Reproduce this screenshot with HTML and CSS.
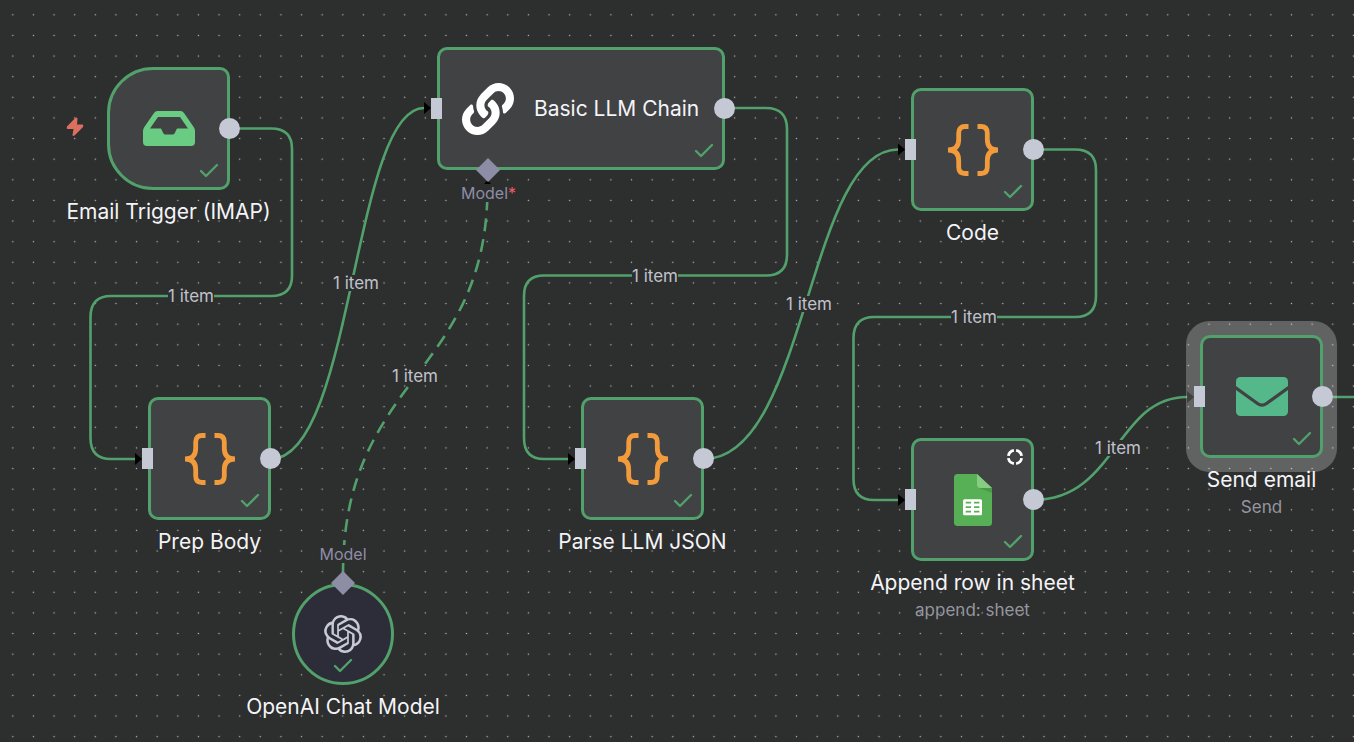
FILE: index.html
```html
<!DOCTYPE html>
<html lang="en">
<head>
<meta charset="utf-8">
<title>Workflow canvas</title>
<link rel="stylesheet" href="styles.css">
</head>
<body>
<svg class="defs" aria-hidden="true">
  <symbol id="check" viewBox="0 0 20 16"><path d="M2 8l5 5L18 2" fill="none" stroke="currentColor" stroke-width="2.4" stroke-linecap="round" stroke-linejoin="round"/></symbol>
  <symbol id="braces" viewBox="0 0 50 52"><g fill="none" stroke="#f29b3c" stroke-width="4.8" stroke-linejoin="round"><path d="M20.5 2.5H17Q10.7 2.5 10.7 9v6.500Q10.700 25.900 0 26Q10.700 26.100 10.700 36.500V43Q10.700 49.500 17 49.500h3.500"/><path d="M29.500 2.500H33Q39.300 2.500 39.300 9v6.500Q39.300 25.900 50 26Q39.300 26.100 39.300 36.500V43Q39.300 49.500 33 49.500h-3.500"/></g></symbol>
</svg>
<main class="canvas">
  <svg class="layer" aria-hidden="true">
    <defs>
      <pattern id="dots" width="16" height="16" patternUnits="userSpaceOnUse" patternTransform="translate(2.500 4.500) scale(1.289)"><circle cx="8" cy="8" r=".56" fill="#b4b5b5"/></pattern>
      <marker id="arrow" viewBox="0 0 7 12" refX="0" refY="6" markerWidth="7" markerHeight="12" markerUnits="userSpaceOnUse" orient="auto"><path d="M0 0l7 6-7 6z"/></marker>
    </defs>
    <rect width="100%" height="100%" fill="url(#dots)"/>
    <g class="edges">
      <path d="M230 128.500H271Q292 128.500 292 149V276Q292 296 271 296H111Q90.500 296 90.500 317V438Q90.500 459 111 459H135"/>
      <path d="M271 459C353 459 353 108 424 108"/>
      <path d="M725 108H766Q787 108 787 129V255Q787 275.500 766 275.500H544Q524 275.500 524 296V438Q524 459 544 459H568"/>
      <path d="M704 459C807 459 807 149.500 898 149.500"/>
      <path d="M1034 149.500H1075Q1096 149.500 1096 170V296Q1096 317 1075 317H874Q853.500 317 853.500 338V479Q853.500 500 874 500H898"/>
      <path d="M1034 500C1116 500 1116 397 1187 397"/>
      <path d="M1323 397H4000" marker-end="none"/>
      <path class="dashed" d="M343 574C343 376 487.500 376 487.500 187"/>
    </g>
  </svg>

  <span class="count c1">1 item</span>
  <span class="count c2">1 item</span>
  <span class="count c3">1 item</span>
  <span class="count c4">1 item</span>
  <span class="count c5">1 item</span>
  <span class="count c6">1 item</span>
  <span class="count c7">1 item</span>

  <svg class="bolt" viewBox="0 0 18 20" aria-hidden="true"><path d="M10.500 .5Q11.800 .5 11.500 2L11 7.500H16.500Q18 8 17 10L8.500 18.500Q6.500 19.500 6.500 18L7.500 12H1.500Q0 11.500 1 9.500L9 1.200Q9.700 .5 10.500 .5Z" fill="#dc705f"/></svg>

  <article class="node email">
    <div class="box trigger">
      <svg class="inbox" viewBox="0 0 52 35"><path fill-rule="evenodd" fill="#6acb83" d="M11 2Q12.300 0 14.500 0H37.500Q39.700 0 41 2L51 16.500Q52 18 52 20V31Q52 35 48 35H4Q0 35 0 31V20Q0 18 1 16.500ZM15 6L7 17.500H18L20.500 22.500Q21 23.500 22 23.500H30Q31 23.500 31.500 22.500L34 17.500H45L37 6Z"/></svg>
      <svg class="check"><use href="#check"/></svg><i class="out"></i>
    </div>
    <h2>Email Trigger (IMAP)</h2>
  </article>

  <article class="node chain">
    <div class="box wide">
      <svg class="link" viewBox="0 0 512 512"><path fill="#fff" d="M326.612 185.391c59.747 59.809 58.927 155.698.36 214.59-.11.12-.24.25-.36.37l-67.200 67.200c-59.270 59.270-155.699 59.262-214.960 0-59.270-59.260-59.270-155.700 0-214.960l37.106-37.106c9.840-9.840 26.786-3.300 27.294 10.606.648 17.722 3.826 35.527 9.690 52.721 1.986 5.822.567 12.262-3.783 16.612l-13.087 13.087c-28.026 28.026-28.905 73.660-1.155 101.960 28.024 28.579 74.086 28.749 102.325.51l67.200-67.190c28.191-28.191 28.073-73.757 0-101.830-3.701-3.694-7.429-6.564-10.341-8.569a16.037 16.037 0 0 1-6.947-12.606c-.396-10.567 3.348-21.456 11.698-29.806l21.054-21.055c5.521-5.521 14.182-6.199 20.584-1.731a152.482 152.482 0 0 1 20.522 17.197zM467.547 44.449c-59.261-59.262-155.690-59.270-214.960 0l-67.200 67.200c-.12.12-.25.25-.36.37-58.566 58.892-59.387 154.781.36 214.590a152.454 152.454 0 0 0 20.521 17.196c6.402 4.468 15.064 3.789 20.584-1.731l21.054-21.055c8.350-8.350 12.094-19.239 11.698-29.806a16.037 16.037 0 0 0-6.947-12.606c-2.912-2.005-6.640-4.875-10.341-8.569-28.073-28.073-28.191-73.639 0-101.830l67.200-67.190c28.239-28.239 74.300-28.069 102.325.51 27.750 28.300 26.872 73.934-1.155 101.960l-13.087 13.087c-4.350 4.350-5.769 10.790-3.783 16.612 5.864 17.194 9.042 34.999 9.690 52.721.509 13.906 17.454 20.446 27.294 10.606l37.106-37.106c59.271-59.259 59.271-155.699.001-214.959z"/></svg>
      <h2>Basic LLM Chain</h2>
      <svg class="check"><use href="#check"/></svg><i class="in"></i><i class="out"></i>
      <svg class="diamond slot" viewBox="0 0 24 24"><path d="M12 0l12 12-12 12L0 12z"/></svg>
      <span class="port need">Model<b>*</b></span>
    </div>
  </article>

  <article class="node prep">
    <div class="box"><svg class="braces"><use href="#braces"/></svg><svg class="check"><use href="#check"/></svg><i class="in"></i><i class="out"></i></div>
    <h2>Prep Body</h2>
  </article>

  <article class="node parse">
    <div class="box"><svg class="braces"><use href="#braces"/></svg><svg class="check"><use href="#check"/></svg><i class="in"></i><i class="out"></i></div>
    <h2>Parse LLM JSON</h2>
  </article>

  <article class="node code">
    <div class="box"><svg class="braces"><use href="#braces"/></svg><svg class="check"><use href="#check"/></svg><i class="in"></i><i class="out"></i></div>
    <h2>Code</h2>
  </article>

  <article class="node append">
    <div class="box">
      <svg class="sheet" viewBox="0 0 38 52"><path fill="#57b055" d="M3.500 0H23L38 14V48.500Q38 52 34.500 52H3.500Q0 52 0 48.500V3.500Q0 0 3.500 0Z"/><path fill="#499a49" d="M25 14H38V19Z"/><path fill="#86cc83" d="M23 0L38 14H26.500Q23 14 23 10.500Z"/><rect x="9" y="25.300" width="19" height="16" rx="1.500" fill="#fff"/><path fill="#57b055" d="M11.700 27.800h5.400v1.700h-5.400zM20 27.800h5.400v1.700H20zM11.700 32.300h5.400V34h-5.400zM20 32.300h5.400V34H20zM11.700 36.800h5.400v1.700h-5.400zM20 36.800h5.400v1.700H20z"/></svg>
      <svg class="ring" viewBox="0 0 18 18"><circle cx="9" cy="9" r="6.700" pathLength="40" fill="none" stroke="#fff" stroke-width="2.800" stroke-dasharray="7.800 2.200" stroke-dashoffset="-1.100"/></svg>
      <svg class="check"><use href="#check"/></svg><i class="in"></i><i class="out"></i>
    </div>
    <h2>Append row in sheet</h2>
    <p>append: sheet</p>
  </article>

  <article class="node send">
    <div class="box selected">
      <svg class="envelope" viewBox="0 0 52 39"><rect width="52" height="39" rx="4.500" fill="#55b88a"/><path d="M-1 10.200L21.500 26.500Q26 29.800 30.500 26.500L53 10.200" fill="none" stroke="#414244" stroke-width="3.200"/></svg>
      <svg class="check"><use href="#check"/></svg><i class="in"></i><i class="out"></i>
    </div>
    <h2>Send email</h2>
    <p>Send</p>
  </article>

  <article class="node model">
    <div class="box round">
      <svg class="openai" viewBox="0 0 24 24"><path fill="#c6c9d6" d="M22.2819 9.8211a5.9847 5.9847 0 0 0-.5157-4.9108 6.0462 6.0462 0 0 0-6.5098-2.9A6.0651 6.0651 0 0 0 4.9807 4.1818a5.9847 5.9847 0 0 0-3.9977 2.9 6.0462 6.0462 0 0 0 .7427 7.0966 5.98 5.98 0 0 0 .511 4.9107 6.051 6.051 0 0 0 6.5146 2.9001A5.9847 5.9847 0 0 0 13.2599 24a6.0557 6.0557 0 0 0 5.7718-4.2058 5.9894 5.9894 0 0 0 3.9977-2.9001 6.0557 6.0557 0 0 0-.7475-7.0729zm-9.022 12.6081a4.4755 4.4755 0 0 1-2.8764-1.0408l.1419-.0804 4.7783-2.7582a.7948.7948 0 0 0 .3927-.6813v-6.7369l2.02 1.1686a.071.071 0 0 1 .038.052v5.5826a4.504 4.504 0 0 1-4.4945 4.4944zm-9.6607-4.1254a4.4708 4.4708 0 0 1-.5346-3.0137l.142.0852 4.783 2.7582a.7712.7712 0 0 0 .7806 0l5.8428-3.3685v2.3324a.0804.0804 0 0 1-.0332.0615L9.74 19.9502a4.4992 4.4992 0 0 1-6.1408-1.6464zM2.3408 7.8956a4.485 4.485 0 0 1 2.3655-1.9728V11.6a.7664.7664 0 0 0 .3879.6765l5.8144 3.3543-2.0201 1.1685a.0757.0757 0 0 1-.071 0l-4.8303-2.7865A4.504 4.504 0 0 1 2.3408 7.872zm16.5963 3.8558L13.1038 8.364 15.1192 7.2a.0757.0757 0 0 1 .071 0l4.8303 2.7913a4.4944 4.4944 0 0 1-.6765 8.1042v-5.6772a.79.79 0 0 0-.407-.667zm2.0107-3.0231l-.142-.0852-4.7735-2.7818a.7759.7759 0 0 0-.7854 0L9.409 9.2297V6.8974a.0662.0662 0 0 1 .0284-.0615l4.8303-2.7866a4.4992 4.4992 0 0 1 6.6802 4.66zM8.3065 12.863l-2.02-1.1638a.0804.0804 0 0 1-.038-.0567V6.0742a4.4992 4.4992 0 0 1 7.3757-3.4537l-.142.0805L8.704 5.459a.7948.7948 0 0 0-.3927.6813zm1.0976-2.3654l2.602-1.4998 2.6069 1.4998v2.9994l-2.5974 1.4997-2.6067-1.4997Z"/></svg>
      <svg class="check"><use href="#check"/></svg>
      <svg class="diamond top" viewBox="0 0 24 24"><path d="M12 0l12 12-12 12L0 12z"/></svg>
      <span class="port above">Model</span>
    </div>
    <h2>OpenAI Chat Model</h2>
  </article>
</main>
</body>
</html>
```
FILE: styles.css
```css
:root {
  --canvas: #2d2e2e;
  --box: #414244;
  --green: #52a16c;
  --handle: #c5c8d5;
  --port: #8d8da6;
}

* { box-sizing: border-box; }

body {
  margin: 0;
  background: var(--canvas);
  font-family: Inter, "Liberation Sans", sans-serif;
}

.defs { position: absolute; width: 0; height: 0; }

.canvas {
  position: relative;
  min-height: 100vh;
  overflow: hidden;
}

.layer { position: absolute; inset: 0; width: 100%; height: 100%; }

.edges path {
  fill: none;
  stroke: var(--green);
  stroke-width: 2.6;
  marker-end: url(#arrow);
}
.edges path[marker-end="none"] { marker-end: none; }
.edges .dashed { stroke-dasharray: 13 8; }

marker path { fill: #000; stroke: none; }

.count {
  position: absolute;
  transform: translate(-50%, -50%);
  background: var(--canvas);
  color: #c0c1cb;
  font-size: 17px;
  line-height: 16px;
  white-space: nowrap;
}
.c1 { left: 191px; top: 296px; }
.c2 { left: 356px; top: 283px; }
.c3 { left: 415px; top: 376px; }
.c4 { left: 655px; top: 276px; }
.c5 { left: 809px; top: 304px; }
.c6 { left: 974px; top: 317px; }
.c7 { left: 1118px; top: 448px; }

.bolt { position: absolute; left: 66px; top: 117px; width: 18px; height: 20px; }

.node {
  position: absolute;
  display: flex;
  flex-direction: column;
  align-items: center;
  width: 123px;
}
.email { left: 107px; top: 67px; }
.chain { left: 437px; top: 47px; width: 288px; }
.prep { left: 148px; top: 397px; }
.parse { left: 581px; top: 397px; }
.code { left: 911px; top: 88px; }
.append { left: 911px; top: 438px; }
.send { left: 1200px; top: 335px; }
.model { left: 292px; top: 583px; width: 102px; }

.node h2 {
  margin: 8px 0 0;
  color: #f4f4f8;
  font-size: 21px;
  font-weight: 400;
  line-height: 27px;
  white-space: nowrap;
}
.node p {
  margin: 4px 0 0;
  color: #95969f;
  font-size: 17px;
  line-height: 20px;
  white-space: nowrap;
}

.box {
  position: relative;
  display: flex;
  align-items: center;
  justify-content: center;
  width: 100%;
  height: 123px;
  border: 3px solid var(--green);
  border-radius: 10px;
  background: var(--box);
}
.trigger { border-radius: 46px 10px 10px 46px; }
.wide { justify-content: flex-start; gap: 20px; padding-left: 22px; }
.wide h2 { margin: 0; }
.selected { box-shadow: 0 0 0 14px rgba(255, 255, 255, 0.25); }
.round { height: 102px; border-radius: 50%; background: #2d2d3a; }

.inbox { width: 52px; height: 35px; }
.link { width: 52px; height: 52px; }
.braces { width: 50px; height: 52px; }
.sheet { width: 38px; height: 52px; }
.envelope { width: 52px; height: 39px; }
.openai { width: 38px; height: 38px; }

.check {
  position: absolute;
  right: 8px;
  bottom: 8px;
  width: 20px;
  height: 16px;
  color: var(--green);
}
.round .check { right: 38px; }

.ring { position: absolute; top: 7px; right: 7px; width: 18px; height: 18px; }

.in, .out { position: absolute; background: var(--handle); }
.in { left: -9px; top: 48px; width: 11px; height: 21px; }
.out { right: -13px; top: 48px; width: 21px; height: 21px; border-radius: 50%; }

.diamond { position: absolute; width: 24px; height: 24px; fill: var(--port); }
.slot { left: 36px; bottom: -15px; }
.top { left: 36px; top: -15px; }

.port {
  position: absolute;
  color: var(--port);
  background: var(--canvas);
  font-size: 16px;
  line-height: 18px;
}
.port b { color: #ee5c66; font-weight: 400; }
.need { left: 21px; top: 134px; }
.above { left: 50%; top: -41px; transform: translateX(-50%); }
```
